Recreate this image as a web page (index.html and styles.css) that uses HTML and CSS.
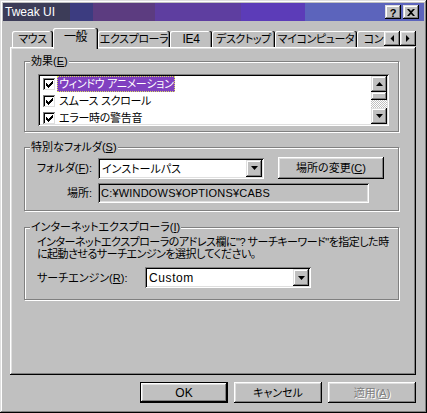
FILE: index.html
```html
<!DOCTYPE html>
<html lang="ja">
<head>
<meta charset="utf-8">
<title>Tweak UI</title>
<link rel="stylesheet" href="styles.css">
</head>
<body>
<div class="window">
  <div class="titlebar">
    <span class="title">Tweak UI</span>
    <div class="caption-btns">
      <span class="cbtn help">?</span>
      <span class="cbtn close"><svg width="8" height="7" viewBox="0 0 8 7"><path d="M0 0h2l2 2 2-2h2v0L5 3.5 8 7H6L4 5 2 7H0l3-3.5z" fill="#000"/></svg></span>
    </div>
  </div>

  <div class="tabrow">
    <div class="tabs">
      <div class="tab t1">マウス</div>
      <div class="tab t2 selected">一般</div>
      <div class="tab t3">エクスプローラ</div>
      <div class="tab t4"><span class="latin">IE4</span></div>
      <div class="tab t5">デスクトップ</div>
      <div class="tab t6">マイコンピュータ</div>
      <div class="tab t7">コントロール</div>
    </div>
    <div class="tabscroll">
      <span class="sbtn"><svg width="4" height="7" viewBox="0 0 4 7"><path d="M4 0v7L0.5 3.5z" fill="#000"/></svg></span>
      <span class="sbtn"><svg width="4" height="7" viewBox="0 0 4 7"><path d="M0 0v7l3.5-3.5z" fill="#000"/></svg></span>
    </div>
  </div>

  <div class="panel">
    <fieldset class="group g1">
      <legend>効果(<u>E</u>)</legend>
      <div class="listbox">
        <div class="items">
          <div class="item">
            <span class="chk"><svg width="7" height="7" viewBox="0 0 7 7"><path d="M0 2h1v1h1v1h1V3h1V2h1V1h1V0h1v3H6v1H5v1H4v1H3v1H2V6H1V5H0z" fill="#000"/></svg></span>
            <span class="itext sel">ウィンドウ アニメーション</span>
          </div>
          <div class="item">
            <span class="chk"><svg width="7" height="7" viewBox="0 0 7 7"><path d="M0 2h1v1h1v1h1V3h1V2h1V1h1V0h1v3H6v1H5v1H4v1H3v1H2V6H1V5H0z" fill="#000"/></svg></span>
            <span class="itext">スムース スクロール</span>
          </div>
          <div class="item">
            <span class="chk"><svg width="7" height="7" viewBox="0 0 7 7"><path d="M0 2h1v1h1v1h1V3h1V2h1V1h1V0h1v3H6v1H5v1H4v1H3v1H2V6H1V5H0z" fill="#000"/></svg></span>
            <span class="itext">エラー時の警告音</span>
          </div>
        </div>
        <div class="vscroll">
          <span class="sb-btn"><svg width="7" height="4" viewBox="0 0 7 4"><path d="M3.5 0L7 4H0z" fill="#000"/></svg></span>
          <span class="sb-thumb"></span>
          <span class="sb-track"></span>
          <span class="sb-btn"><svg width="7" height="4" viewBox="0 0 7 4"><path d="M0 0h7L3.5 4z" fill="#000"/></svg></span>
        </div>
      </div>
    </fieldset>

    <fieldset class="group g2">
      <legend>特別なフォルダ(<u>S</u>)</legend>
      <div class="row r1">
        <span class="lbl">フォルダ(<u>F</u>):</span>
        <div class="combo c1">
          <span class="combo-text">インストールパス</span>
          <span class="combo-btn"><svg width="7" height="4" viewBox="0 0 7 4"><path d="M0 0h7L3.5 4z" fill="#000"/></svg></span>
        </div>
        <span class="pbtn change">場所の変更(<u>C</u>)</span>
      </div>
      <div class="row r2">
        <span class="lbl">場所:</span>
        <div class="field">C:¥WINDOWS¥OPTIONS¥CABS</div>
      </div>
    </fieldset>

    <fieldset class="group g3">
      <legend>インターネットエクスプローラ(<u>I</u>)</legend>
      <p class="desc">インターネットエクスプローラのアドレス欄に"? サーチキーワード"を指定した時<br>に起動させるサーチエンジンを選択してください。</p>
      <div class="row r3">
        <span class="lbl3">サーチエンジン(<u>R</u>):</span>
        <div class="combo c2">
          <span class="combo-text latin custom">Custom</span>
          <span class="combo-btn"><svg width="7" height="4" viewBox="0 0 7 4"><path d="M0 0h7L3.5 4z" fill="#000"/></svg></span>
        </div>
      </div>
    </fieldset>
  </div>

  <div class="buttons">
    <span class="btn default"><span class="latin">OK</span></span>
    <span class="btn">キャンセル</span>
    <span class="btn disabled">適用(<u>A</u>)</span>
  </div>
</div>
</body>
</html>
```

FILE: styles.css
```css
* { box-sizing: border-box; }
html, body { margin: 0; padding: 0; }
body {
  width: 427px;
  height: 413px;
  overflow: hidden;
  background: #c0c0c0;
  color: #000;
  font-family: "Liberation Sans", "Noto Sans CJK JP", sans-serif;
  font-size: 11px;
  line-height: 12px;
  font-feature-settings: "palt";
}
u { text-decoration: underline; text-underline-offset: 1px; }
.latin { font-size: 12px; }

.window {
  width: 427px;
  height: 413px;
  padding: 3px;
  background: #c0c0c0;
  display: flex;
  flex-direction: column;
  box-shadow: inset -1px -1px #000, inset 1px 1px #dfdfdf, inset -2px -2px #808080, inset 2px 2px #fff;
}

/* title bar */
.titlebar {
  height: 18px;
  display: flex;
  align-items: center;
  padding-left: 2px;
  background: linear-gradient(90deg,
    #3c3c58 0, #3c3c58 67px,
    #3c3c80 67px, #3c3c80 90px,
    #5c3c80 90px, #5c3c80 152px,
    #5e3ea0 152px, #5e3ea0 238px,
    #5c3cb8 238px, #5c3cb8 302px,
    #5c64bc 302px);
}
.title { color: #fff; font-size: 12px; }
.caption-btns { margin-left: auto; margin-right: 5px; display: flex; gap: 2px; }
.cbtn {
  width: 16px;
  height: 14px;
  display: flex;
  align-items: center;
  justify-content: center;
  background: #c0c0c0;
  box-shadow: inset -1px -1px #000, inset 1px 1px #dfdfdf, inset -2px -2px #808080, inset 2px 2px #fff;
}
.help { font-weight: bold; font-size: 11px; padding-top: 1px; }

/* tabs */
.tabrow {
  height: 19px;
  margin: 7px 8px 0 7px;
  display: flex;
  position: relative;
  z-index: 1;
}
.tabs {
  flex: 1;
  height: 21px;
  display: flex;
  align-items: flex-end;
  overflow: hidden;
  padding-left: 2px;
}
.tab {
  flex: none;
  height: 16px;
  margin-bottom: 2px;
  padding-top: 2px;
  text-align: center;
  white-space: nowrap;
  letter-spacing: -0.4px;
  background: #c0c0c0;
  border-radius: 2px 2px 0 0;
  box-shadow: inset -1px 0 #000, inset -2px 0 #808080, inset 1px 1px #fff;
}
.tab.selected {
  height: 21px;
  margin-bottom: 0;
  padding-top: 3px;
  font-size: 12px;
}
.t1 { width: 41px; }
.t2 { width: 45px; }
.t3 { width: 72px; }
.t4 { width: 42px; }
.t5 { width: 63px; }
.t6 { width: 82px; }
.t7 { width: 72px; }
.tabscroll { display: flex; margin-top: 3px; align-self: flex-start; }
.sbtn {
  width: 16px;
  height: 15px;
  display: flex;
  align-items: center;
  justify-content: center;
  background: #c0c0c0;
  box-shadow: inset -1px -1px #000, inset 1px 1px #fff, inset -2px -2px #808080, inset 2px 2px #dfdfdf;
}

/* panel */
.panel {
  height: 328px;
  margin: 0 8px 0 7px;
  padding: 2px 17px 0 14px;
  display: flex;
  flex-direction: column;
  box-shadow: inset -1px -1px #000, inset 1px 1px #fff, inset -2px -2px #808080, inset 2px 2px #dfdfdf;
}
.group {
  margin: 0;
  padding: 0;
  min-width: 0;
  border: 1px solid #808080;
  box-shadow: inset 1px 1px #fff, 1px 1px #fff;
}
.group legend {
  margin-left: 5px;
  padding: 0 1px;
  height: 12px;
  line-height: 12px;
  background: #c0c0c0;
  white-space: nowrap;
}
.g1 { margin-top: 6px; }
.g2 { margin-top: 9px; }
.g3 { margin-top: 10px; }

/* listbox */
.listbox {
  margin: 7px 9px 5px 13px;
  height: 52px;
  padding: 2px;
  display: flex;
  background: #fff;
  box-shadow: inset 1px 1px #808080, inset -1px -1px #fff, inset 2px 2px #000, inset -2px -2px #dfdfdf;
}
.items { flex: 1; overflow: hidden; }
.item {
  height: 17px;
  display: flex;
  align-items: flex-start;
  padding-left: 3px;
  white-space: nowrap;
}
.chk {
  width: 12px;
  height: 12px;
  margin-top: 2px;
  margin-right: 2px;
  display: flex;
  align-items: center;
  justify-content: center;
  background: #fff;
  box-shadow: inset 1px 1px #808080, inset -1px -1px #dfdfdf, inset 2px 2px #000;
}
.chk svg { margin: 1px 0 0 1px; }
.itext {
  height: 16px;
  line-height: 16px;
  padding: 0 2px;
  letter-spacing: -0.3px;
}
.itext.sel {
  background: #8040c0;
  color: #fff;
  outline: 1px dotted #d8e060;
  outline-offset: -1px;
}
.vscroll { width: 16px; display: flex; flex-direction: column; }
.sb-btn, .sb-thumb, .combo-btn {
  display: flex;
  align-items: center;
  justify-content: center;
  background: #c0c0c0;
  box-shadow: inset -1px -1px #000, inset 1px 1px #dfdfdf, inset -2px -2px #808080, inset 2px 2px #fff;
}
.sb-btn { height: 16px; }
.sb-thumb { height: 8px; }
.sb-track {
  flex: 1;
  background: repeating-conic-gradient(#c0c0c0 0 25%, #fff 0 50%) 0 0 / 2px 2px;
}

/* rows */
.row { display: flex; align-items: center; }
.r1 { margin-top: 4px; }
.r2 { margin-top: 4px; margin-bottom: 7px; }
.lbl { width: 67px; text-align: right; white-space: nowrap; }
.combo {
  height: 21px;
  padding: 2px;
  display: flex;
  background: #fff;
  box-shadow: inset 1px 1px #808080, inset -1px -1px #fff, inset 2px 2px #000, inset -2px -2px #dfdfdf;
}
.c1 { width: 166px; margin-left: 6px; }
.c2 { width: 166px; }
.combo-text { flex: 1; padding: 3px 0 0 2px; white-space: nowrap; }
.custom { letter-spacing: 0.6px; }
.combo-btn { width: 16px; }
.pbtn {
  width: 106px;
  height: 22px;
  margin-left: 14px;
  display: flex;
  align-items: center;
  justify-content: center;
  background: #c0c0c0;
  box-shadow: inset -1px -1px #000, inset 1px 1px #fff, inset -2px -2px #808080, inset 2px 2px #dfdfdf;
}
.field {
  width: 271px;
  height: 20px;
  margin-left: 6px;
  padding: 4px 0 0 3px;
  font-size: 11px;
  letter-spacing: 0.2px;
  white-space: nowrap;
  background: #c0c0c0;
  box-shadow: inset 1px 1px #808080, inset -1px -1px #fff, inset 2px 2px #000, inset -2px -2px #dfdfdf;
}
.desc {
  margin: 3px 0 0 12px;
  line-height: 12px;
  letter-spacing: -0.5px;
  white-space: nowrap;
}
.r3 { margin: 7px 0 11px 12px; }
.lbl3 { width: 108px; white-space: nowrap; }

/* bottom buttons */
.buttons {
  margin: 7px 8px 0 0;
  display: flex;
  justify-content: flex-end;
  gap: 6px;
}
.btn {
  width: 88px;
  height: 21px;
  display: flex;
  align-items: center;
  justify-content: center;
  background: #c0c0c0;
  box-shadow: inset -1px -1px #000, inset 1px 1px #fff, inset -2px -2px #808080, inset 2px 2px #dfdfdf;
}
.btn.default {
  border: 1px solid #000;
}
.btn.disabled {
  color: #808080;
  text-shadow: 1px 1px #fff;
}
```
